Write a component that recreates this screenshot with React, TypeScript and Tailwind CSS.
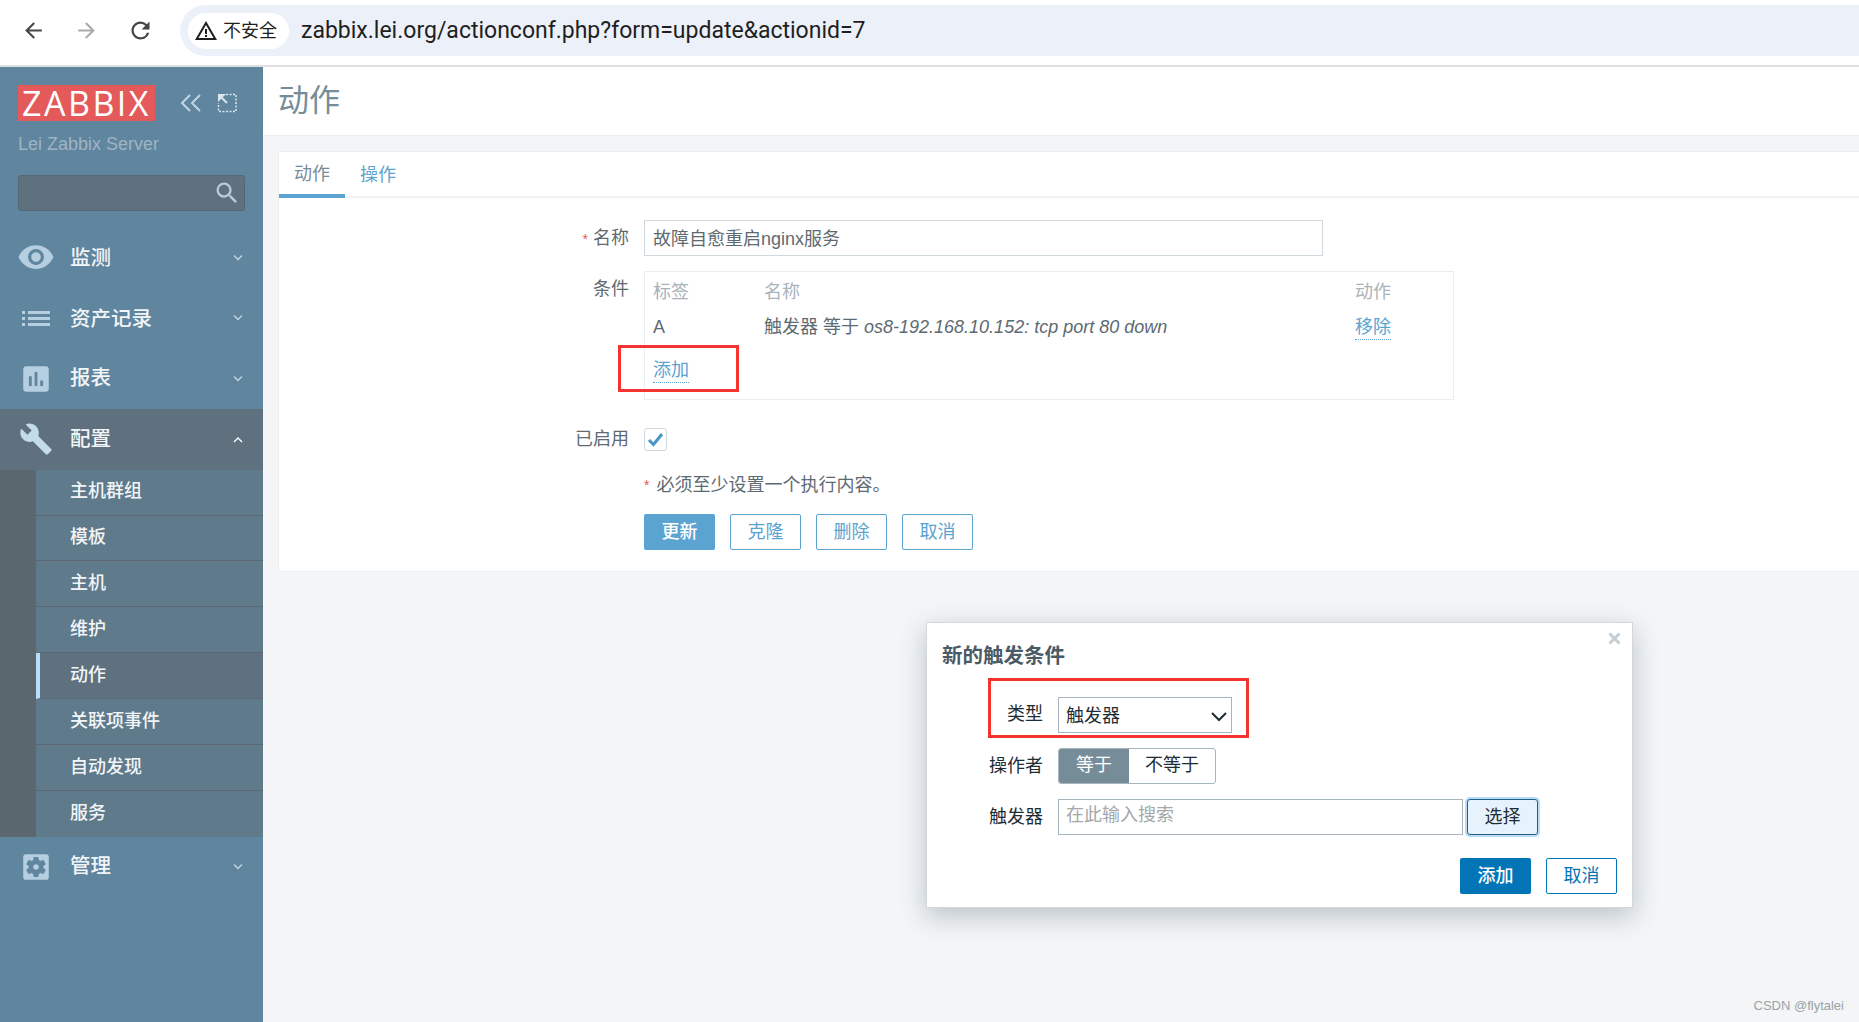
import React from "react";
import { MdArrowBack, MdArrowForward, MdRefresh, MdVisibility, MdAssessment, MdBuild, MdSettingsApplications, MdSearch, MdWarningAmber } from "react-icons/md";

const font = "font-['Liberation_Sans','Noto_Sans_CJK_SC',sans-serif]";

function Chevron({ up = false, className = "" }: { up?: boolean; className?: string }) {
  return (
    <svg width="10" height="7" viewBox="0 0 10 7" className={className} fill="none" stroke="currentColor" strokeWidth="1.4">
      <path d={up ? "M1 6l4-4 4 4" : "M1 1.5l4 4 4-4"} />
    </svg>
  );
}

function ListIcon() {
  return (
    <svg width="28" height="16" viewBox="0 0 28 16" fill="#b5cfe0">
      <rect x="0" y="1" width="3" height="3" />
      <rect x="0" y="7" width="3" height="3" />
      <rect x="0" y="13" width="3" height="3" />
      <rect x="6" y="1" width="22" height="3" />
      <rect x="6" y="7" width="22" height="3" />
      <rect x="6" y="13" width="22" height="3" />
    </svg>
  );
}

function MainItem({ icon, label, up = false, active = false, textClass = "" }: { icon: React.ReactNode; label: string; up?: boolean; active?: boolean; textClass?: string }) {
  return (
    <div className={`flex h-[60.67px] items-center text-[20.5px] font-medium text-[#f2f5f7] ${active ? "bg-[#5f717e]" : ""}`}>
      <div className="flex w-[70px] shrink-0 items-center justify-center pl-[1px]">{icon}</div>
      <span className={`flex-1 ${textClass}`}>{label}</span>
      <Chevron up={up} className={`mr-[20px] ${active ? "text-white" : "text-[#c3d6e2]"}`} />
    </div>
  );
}

function SubItem({ label, active = false, low = false }: { label: string; active?: boolean; low?: boolean }) {
  return (
    <div className={`flex h-[45.875px] items-center border-b border-[#596873] text-[18px] font-medium text-[#f2f5f7] ${low ? "pb-0" : "pb-[1px]"} ${active ? "border-l-4 border-l-[#b6deff] bg-[#5f717e] pl-[30px]" : "pl-[34px]"}`}>
      {label}
    </div>
  );
}

function OutlineButton({ label }: { label: string }) {
  return (
    <div className="flex h-[36px] w-[71px] items-center justify-center rounded-[2px] border border-[#5ba3d0] text-[18px] text-[#5ba3d0]">
      {label}
    </div>
  );
}

function Sidebar() {
  return (
    <aside className="flex w-[263px] shrink-0 flex-col bg-[#5f859f]">
      <div className="flex items-center px-[18px] pt-[18px]">
        <div className="flex h-[36px] w-[137px] items-center justify-center bg-[#e45959] font-['Open_Sans',sans-serif] text-[34px] leading-none tracking-[2.5px] text-white">ZABBIX</div>
        <svg width="24" height="20" viewBox="0 0 24 20" fill="none" stroke="#c3d6e2" strokeWidth="2" className="ml-[24px]">
          <path d="M11 2L3 10l8 8M21 2l-8 8 8 8" />
        </svg>
        <svg width="20" height="20" viewBox="0 0 20 20" fill="none" stroke="#dbe6ed" className="ml-[14px]">
          <path d="M9 1.5h10v17H1.5V10" strokeDasharray="2 1.5" strokeWidth="1.5" />
          <path d="M1 1h8L1 9z" fill="#dbe6ed" stroke="none" />
          <path d="M3 3l7 7" strokeWidth="2" />
        </svg>
      </div>
      <div className="mt-[13px] px-[18px] text-[18px] leading-[20px] text-[#9fb4c3]">Lei Zabbix Server</div>
      <div className="mx-[18px] mt-[21px] flex h-[36px] items-center justify-end rounded-[3px] border border-[#566771] bg-[#5f717e] pr-[3px]">
        <MdSearch size={28} color="#b5cfe0" />
      </div>
      <nav className="mt-[16px]">
        <MainItem icon={<MdVisibility size={38} color="#b5cfe0" />} label="监测" textClass="pt-[2px]" />
        <MainItem icon={<ListIcon />} label="资产记录" textClass="pt-[2px]" />
        <MainItem icon={<MdAssessment size={34} color="#b5cfe0" />} label="报表" />
        <MainItem icon={<MdBuild size={34} color="#c3dcea" />} label="配置" up active />
        <div className="bg-[#5a676f] pl-[36px]">
          <div className="bg-[#5f7a8b]">
            <SubItem label="主机群组" />
            <SubItem label="模板" />
            <SubItem label="主机" />
            <SubItem label="维护" />
            <SubItem label="动作" active />
            <SubItem label="关联项事件" low />
            <SubItem label="自动发现" low />
            <div className="flex h-[45.875px] items-center pl-[34px] text-[18px] font-medium text-[#f2f5f7]">服务</div>
          </div>
        </div>
        <MainItem icon={<MdSettingsApplications size={34} color="#b5cfe0" />} label="管理" textClass="pb-[2px]" />
      </nav>
    </aside>
  );
}

function Dialog() {
  return (
    <div className="absolute left-[926px] top-[622px] h-[286px] w-[707px] border border-[#d0d8dc] bg-white pl-[15px] pr-[15px] pt-[20px] text-[#1f2c33] shadow-[0_8px_24px_rgba(60,80,100,0.3)]">
      <svg width="13" height="13" viewBox="0 0 13 13" className="absolute right-[11px] top-[9px]" fill="none" stroke="#c2ced4" strokeWidth="3">
        <path d="M1.5 1.5l10 10M11.5 1.5l-10 10" />
      </svg>
      <div className="text-[20.5px] font-bold leading-[26px] text-[#4a5b66]">新的触发条件</div>
      <div className="mt-[28px] flex h-[36px] items-center">
        <div className="mr-[15px] w-[101px] pb-[2px] text-right text-[18px] leading-[28px]">类型</div>
        <div className="flex h-[36px] w-[174px] items-center justify-between border border-[#a8b5bc] pl-[7px] pr-[3px] pt-[2px] text-[18px]">
          <span>触发器</span>
          <svg width="18" height="11" viewBox="0 0 18 11" fill="none" stroke="#1f2c33" strokeWidth="2"><path d="M2 2l7 7 7-7" /></svg>
        </div>
      </div>
      <div className="mt-[15px] flex h-[36px] items-center">
        <div className="mr-[15px] w-[101px] text-right text-[18px]">操作者</div>
        <div className="flex h-[36px] w-[158px] overflow-hidden rounded-[3px] border border-[#a8b5bc] text-[18px]">
          <div className="flex w-[70px] items-center justify-center bg-[#768d99] pb-[2px] text-white">等于</div>
          <div className="flex flex-1 items-center justify-center pb-[2px]">不等于</div>
        </div>
      </div>
      <div className="mt-[15px] flex h-[36px] items-center">
        <div className="mr-[15px] w-[101px] text-right text-[18px]">触发器</div>
        <div className="flex h-[36px] w-[405px] items-center border border-[#a8b5bc] pb-[3px] pl-[7px] text-[18px] text-[#a4a8aa]">在此输入搜索</div>
        <div className="ml-[4px] flex h-[36px] w-[71px] items-center justify-center rounded-[3px] border border-[#22608a] bg-[#e6f3fd] text-[18px] shadow-[0_0_0_2px_#b8dcf8]">选择</div>
      </div>
      <div className="mt-[23px] flex justify-end gap-[15px]">
        <div className="flex h-[36px] w-[71px] items-center justify-center rounded-[2px] bg-[#0275b8] text-[18px] font-medium text-white">添加</div>
        <div className="flex h-[36px] w-[71px] items-center justify-center rounded-[2px] border border-[#0275b8] text-[18px] text-[#0275b8]">取消</div>
      </div>
      <div className="absolute left-[61px] top-[55px] h-[60px] w-[261px] border-[3px] border-[#f53333]" />
    </div>
  );
}

export default function App() {
  return (
    <div className={`relative flex h-[1022px] w-[1859px] flex-col overflow-hidden bg-[#f3f5f6] ${font}`}>
      <header className="flex h-[67px] shrink-0 items-center border-b-2 border-[#e0e0e0] bg-white pb-[4px]">
        <MdArrowBack size={25} color="#444746" className="ml-[21px]" />
        <MdArrowForward size={25} color="#a9abad" className="ml-[28px]" />
        <MdRefresh size={27} color="#444746" className="ml-[28px]" />
        <div className="ml-[26px] flex h-[51px] flex-1 items-center rounded-l-[26px] bg-[#ecf0f8] pl-[8px]">
          <div className="flex h-[36px] w-[101px] items-center rounded-[18px] bg-white pl-[6px] text-[18px] text-[#1f1f1f]">
            <MdWarningAmber size={24} color="#1f1f1f" />
            <span className="ml-[5px] pt-[2px]">不安全</span>
          </div>
          <span className="ml-[12px] pt-[2px] font-['Roboto',sans-serif] text-[23px] text-[#1f1f1f]">zabbix.lei.org/actionconf.php?form=update&amp;actionid=7</span>
        </div>
      </header>
      <div className="flex flex-1">
        <Sidebar />
        <main className="flex-1">
          <div className="flex h-[69px] items-center border-b border-[#ebeef0] bg-white pl-[15px] text-[31px] text-[#768d99]">动作</div>
          <section className="ml-[15px] mt-[15px] h-[421px] border border-r-0 border-[#ebeef0] bg-white text-[18px] text-[#5e6a72]">
            <div className="flex h-[46px] border-b-2 border-[#f0f2f3]">
              <div className="flex h-[46px] w-[66px] items-center justify-center border-b-4 border-[#5ba3d0] pt-[2px] text-[#768d99]">动作</div>
              <div className="ml-[15px] flex h-[42px] items-center pt-[4px] text-[#5ba3d0]">操作</div>
            </div>
            <div className="mt-[22px] flex h-[36px]">
              <div className="w-[365px] pr-[15px] pt-[5px] text-right"><span className="mr-[5px] text-[14px] text-[#e45959]">*</span>名称</div>
              <div className="flex h-[36px] w-[679px] items-center border border-[#cfd8dc] pl-[8px] pt-[3px]">故障自愈重启nginx服务</div>
            </div>
            <div className="mt-[15px] flex">
              <div className="w-[365px] pr-[15px] pt-[5px] text-right">条件</div>
              <div className="h-[129px] w-[810px] border border-[#ebeef0] pl-[8px] pt-[6px]">
                <div className="flex h-[28px] items-center text-[#a9b3b9]">
                  <div className="w-[111px]">标签</div>
                  <div className="w-[591px]">名称</div>
                  <div>动作</div>
                </div>
                <div className="mt-[7px] flex h-[28px] items-center">
                  <div className="w-[111px]">A</div>
                  <div className="w-[591px]">触发器 等于 <i>os8-192.168.10.152: tcp port 80 down</i></div>
                  <div className="border-b border-dotted border-[#5ba3d0] leading-[24px] text-[#5ba3d0]">移除</div>
                </div>
                <div className="mt-[15px] flex h-[28px] items-center">
                  <div className="border-b border-dotted border-[#5ba3d0] leading-[24px] text-[#5ba3d0]">添加</div>
                </div>
              </div>
            </div>
            <div className="mt-[27px] flex h-[24px] items-center">
              <div className="w-[365px] pr-[15px] pt-[1px] text-right">已启用</div>
              <div className="flex h-[23px] w-[23px] items-center justify-center rounded-[3px] border border-[#cfd8dc]">
                <svg width="17" height="15" viewBox="0 0 17 15" fill="none" stroke="#4796c4" strokeWidth="3"><path d="M2 8l4.5 4.5L15 2" /></svg>
              </div>
            </div>
            <div className="mt-[22px] flex h-[24px] items-center pl-[365px]"><span className="mr-[7px] text-[14px] text-[#e45959]">*</span>必须至少设置一个执行内容。</div>
            <div className="mt-[17px] flex gap-[15px] pl-[365px]">
              <div className="flex h-[36px] w-[71px] items-center justify-center rounded-[2px] bg-[#5ba3d0] font-medium text-white">更新</div>
              <OutlineButton label="克隆" />
              <OutlineButton label="删除" />
              <OutlineButton label="取消" />
            </div>
          </section>
        </main>
      </div>
      <div className="absolute left-[618px] top-[345px] h-[47px] w-[121px] border-[3px] border-[#f53333]" />
      <Dialog />
      <div className="absolute bottom-[7px] right-[15px] text-[13px] text-[#9aa3a8]">CSDN @flytalei</div>
    </div>
  );
}
